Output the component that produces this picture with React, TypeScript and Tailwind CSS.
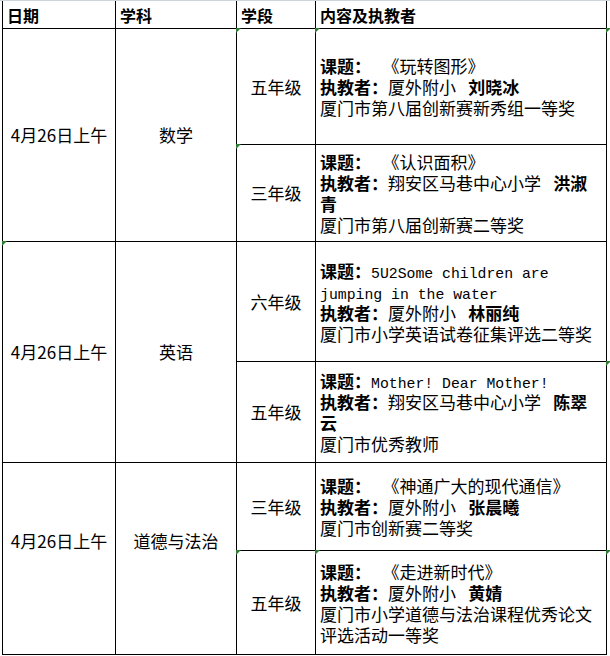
import React from "react";

type Seg = { t: string; b?: boolean; mono?: boolean };
type Entry = { grade: string; lines: Seg[][]; marks?: ("l" | "r")[] };
type Group = { date: string; subject: string; shift?: boolean; mark?: boolean; entries: [Entry, Entry] };

const L = (title: string, mono = false): Seg[] => [{ t: "课题：", b: true }, { t: title, mono }];
const T = (school: string, name: string): Seg[] => [
  { t: "执教者：", b: true },
  { t: school },
  { t: "\u2002 " },
  { t: name, b: true },
];

const GROUPS: Group[] = [
  {
    date: "4月26日上午",
    subject: "数学",
    entries: [
      {
        grade: "五年级",
        marks: ["l", "r"],
        lines: [L("   《玩转图形》"), T("厦外附小", "刘晓冰"), [{ t: "厦门市第八届创新赛新秀组一等奖" }]],
      },
      {
        grade: "三年级",
        lines: [L("   《认识面积》"), T("翔安区马巷中心小学", "洪淑"), [{ t: "青", b: true }], [{ t: "厦门市第八届创新赛二等奖" }]],
      },
    ],
  },
  {
    date: "4月26日上午",
    subject: "英语",
    mark: true,
    entries: [
      {
        grade: "六年级",
        lines: [L("5U2Some children are", true), [{ t: "jumping in the water", mono: true }], T("厦外附小", "林丽纯"), [{ t: "厦门市小学英语试卷征集评选二等奖" }]],
      },
      {
        grade: "五年级",
        marks: ["r"],
        lines: [L("Mother! Dear Mother!", true), T("翔安区马巷中心小学", "陈翠"), [{ t: "云", b: true }], [{ t: "厦门市优秀教师" }]],
      },
    ],
  },
  {
    date: "4月26日上午",
    subject: "道德与法治",
    shift: true,
    entries: [
      {
        grade: "三年级",
        lines: [L("   《神通广大的现代通信》"), T("厦外附小", "张晨曦"), [{ t: "厦门市创新赛二等奖" }]],
      },
      {
        grade: "五年级",
        marks: ["l", "r"],
        lines: [L("   《走进新时代》"), T("厦外附小", "黄婧"), [{ t: "厦门市小学道德与法治课程优秀论文" }], [{ t: "评选活动一等奖" }]],
      },
    ],
  },
];

// little green corner flags, like a spreadsheet's error markers
function Mark({ right }: { right?: boolean }) {
  return (
    <span
      className={`absolute -top-px h-0 w-0 border-t-[5px] border-r-[5px] border-t-[#2f7d32] border-r-transparent ${right ? "left-[290px]" : "-left-px"}`}
    />
  );
}

function Cell({ children, className = "" }: { children?: React.ReactNode; className?: string }) {
  return <div className={`relative border-r border-b border-black ${className}`}>{children}</div>;
}

export default function App() {
  return (
    <div
      className="h-[656px] w-[610px] overflow-hidden border-t border-[#cfd3da] bg-white text-black"
      style={{ fontFamily: '"Noto Sans CJK SC", "Noto Sans", sans-serif' }}
    >
      <div className="ml-[2px] grid w-[605px] grid-cols-[113px_121px_79px_291px] grid-rows-[28px_116px_97px_120px_101px_88px_104px] border-l border-black">
        {["日期", "学科", "学段", "内容及执教者"].map((h) => (
          <Cell key={h} className="flex items-center pl-1 text-[16px] font-bold">
            {h}
          </Cell>
        ))}

        {GROUPS.map((g, gi) => (
          <React.Fragment key={gi}>
            <Cell className={`row-span-2 flex items-center justify-center text-[17px] ${g.shift ? "pb-[36px]" : ""}`}>
              {g.mark && <Mark />}
              {g.date}
            </Cell>
            <Cell className={`row-span-2 flex items-center justify-center text-[17px] ${g.shift ? "pb-[36px]" : ""}`}>
              {g.subject}
            </Cell>
            {g.entries.map((e, ei) => (
              <React.Fragment key={ei}>
                <Cell className="flex items-center justify-center text-[17px]">
                  {(e.marks?.includes("l") || (gi === 0 && ei === 1)) && <Mark />}
                  {e.grade}
                </Cell>
                <Cell className="flex flex-col justify-center pl-1 text-[17px]">
                  {e.marks?.includes("l") && <Mark />}
                  {e.marks?.includes("r") && <Mark right />}
                  {e.lines.map((line, li) => (
                    <div key={li} className="h-[21px] whitespace-pre leading-[21px]">
                      {line.map((s, si) => (
                        <span
                          key={si}
                          className={`${s.b ? "font-bold" : ""} ${s.mono ? "text-[14.8px]" : ""}`}
                          style={s.mono ? { fontFamily: '"Liberation Mono", monospace' } : undefined}
                        >
                          {s.t}
                        </span>
                      ))}
                    </div>
                  ))}
                </Cell>
              </React.Fragment>
            ))}
          </React.Fragment>
        ))}
      </div>
    </div>
  );
}
